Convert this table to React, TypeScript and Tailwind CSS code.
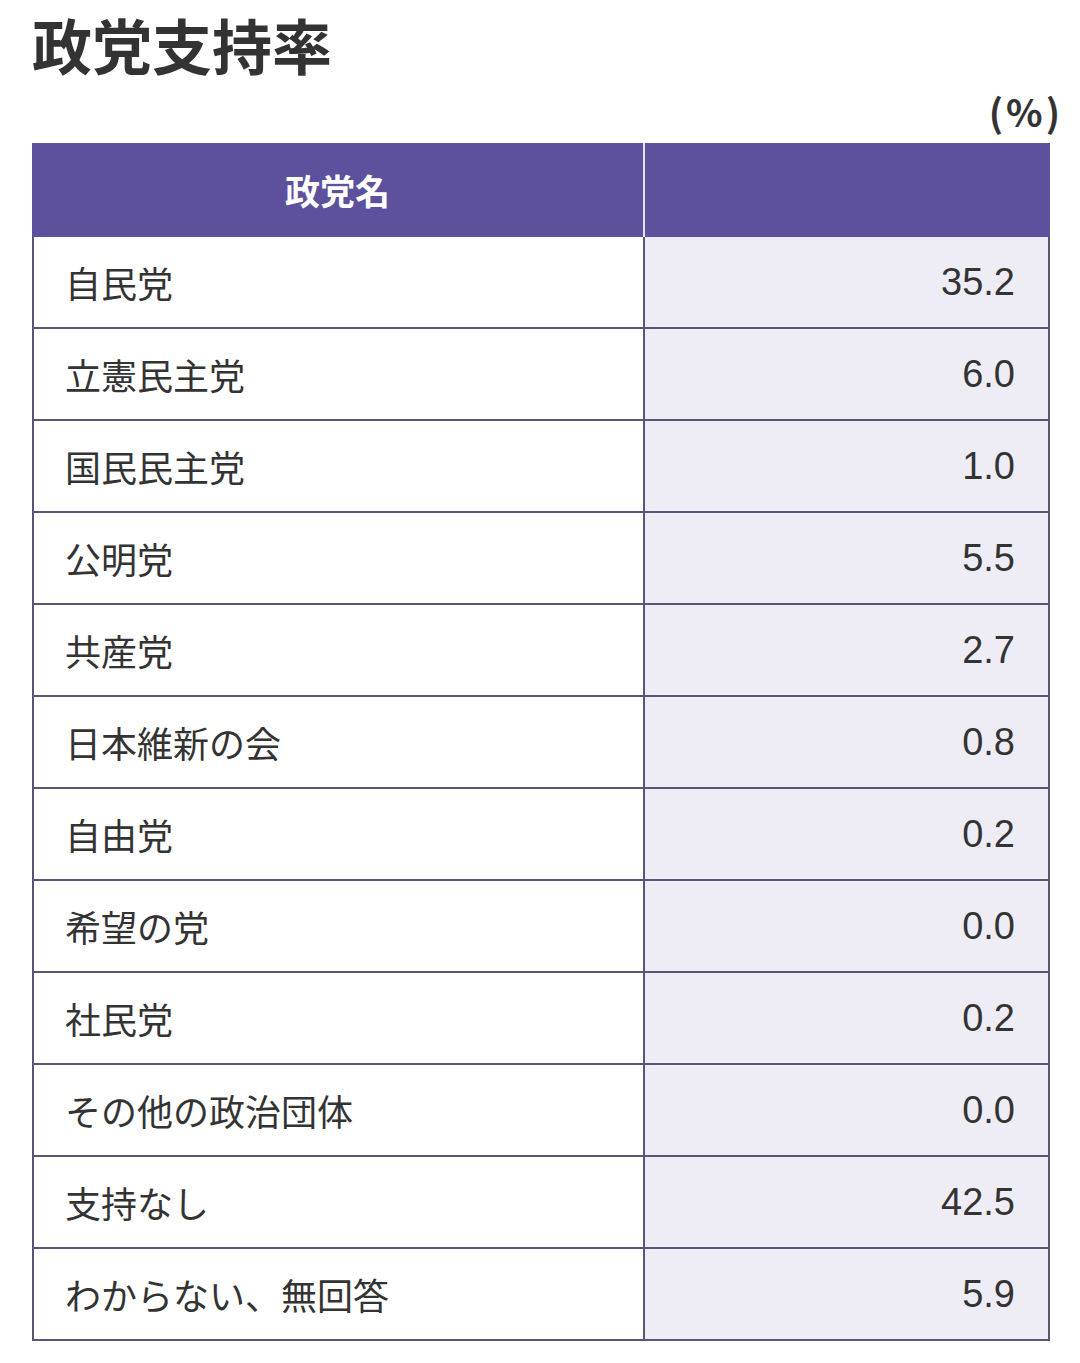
const rows: [string, string][] = [
  ["自民党", "35.2"],
  ["立憲民主党", "6.0"],
  ["国民民主党", "1.0"],
  ["公明党", "5.5"],
  ["共産党", "2.7"],
  ["日本維新の会", "0.8"],
  ["自由党", "0.2"],
  ["希望の党", "0.0"],
  ["社民党", "0.2"],
  ["その他の政治団体", "0.0"],
  ["支持なし", "42.5"],
  ["わからない、無回答", "5.9"],
];

const App = () => {
  return (
    <div className="w-[1080px] min-h-[1363px] bg-white pl-[32px] pr-[30px] pt-[10px] text-[#333333] font-['Noto_Sans_CJK_JP',sans-serif]">
      {/* ===== TITLE ===== */}
      <h1 className="text-[60px] leading-[68px] font-bold">政党支持率</h1>

      {/* ===== UNIT ===== */}
      <div className="flex justify-end -mr-[13px] h-[65px] items-center">
        <span className="text-[38px] font-bold leading-none tracking-[3px]">(%)</span>
      </div>

      {/* ===== TABLE ===== */}
      <div className="w-[1018px]">
        <div className="grid grid-cols-[613px_405px] h-[94px] bg-[#5d519d]">
          <div className="flex items-center justify-center border-r-2 border-[#e8e6f2] text-white text-[35px] font-bold">
            政党名
          </div>
          <div></div>
        </div>
        <div className="border-x-2 border-b-2 border-[#5a5576]">
          {rows.map(([name, value], i) => (
            <div
              key={name}
              className={
                i < rows.length - 1
                  ? "grid grid-cols-[611px_403px] h-[92px] border-b-2 border-[#5a5576]"
                  : "grid grid-cols-[611px_403px] h-[90px]"
              }
            >
              <div className="flex items-center pl-[31px] border-r-2 border-[#5a5576] bg-white text-[36px]">
                {name}
              </div>
              <div className="flex items-center justify-end pr-[33px] bg-[#eeedf6] text-[38px] font-['Liberation_Sans',Arial,sans-serif]">
                {value}
              </div>
            </div>
          ))}
        </div>
      </div>
    </div>
  );
};

export default App;
